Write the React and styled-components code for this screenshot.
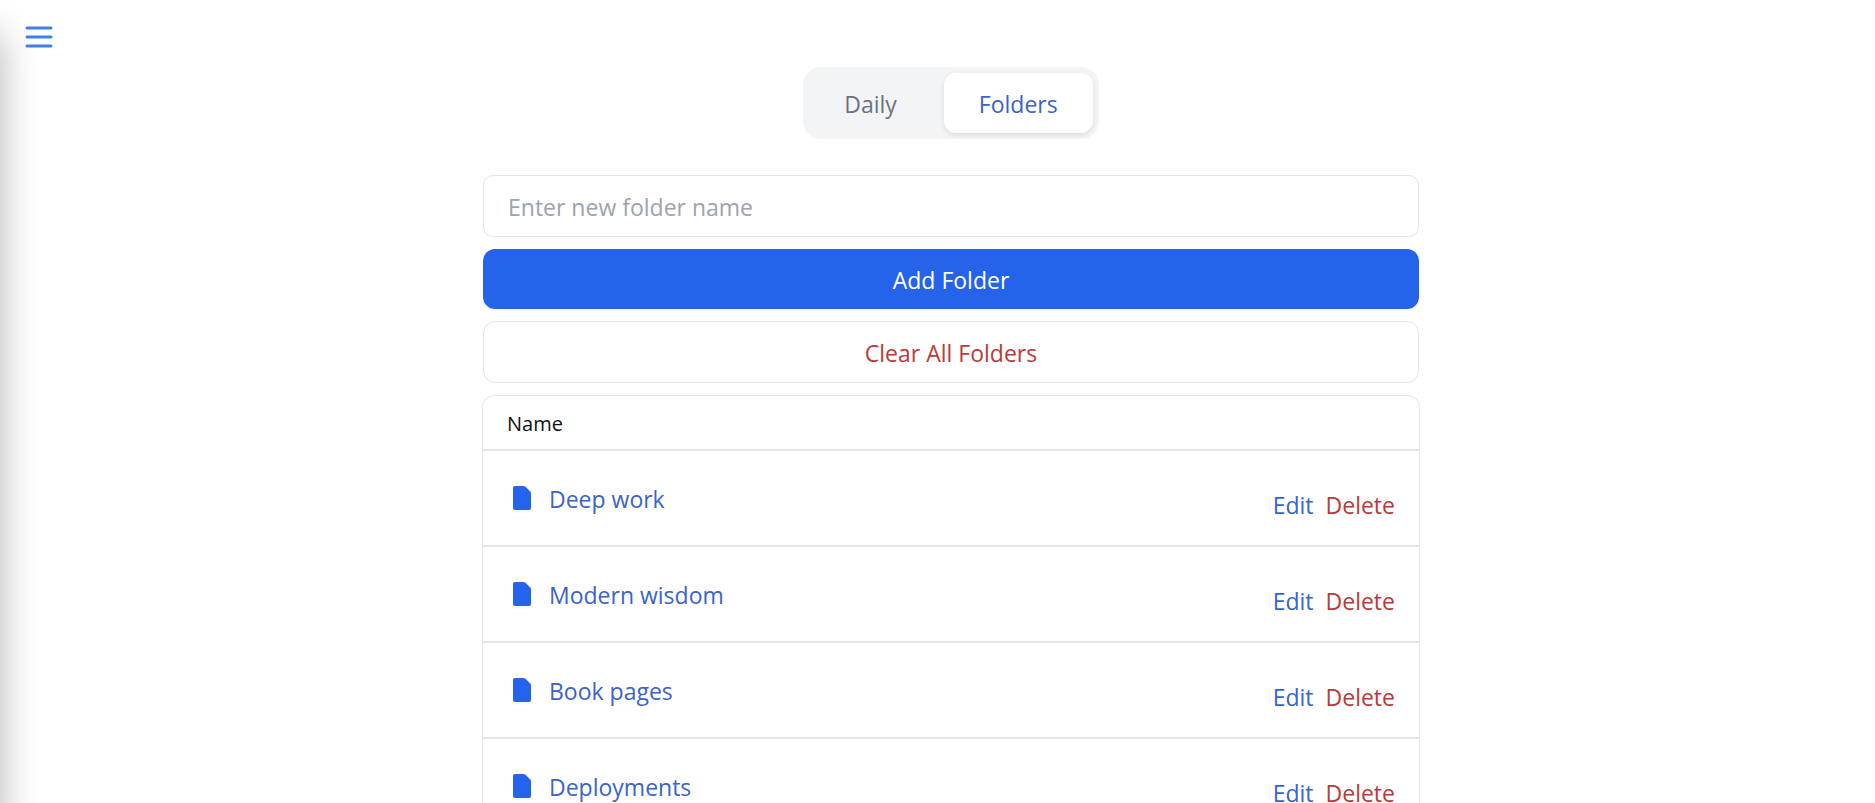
import React, { useState } from 'react';
import styled, { createGlobalStyle } from 'styled-components';

const blue = '#2563eb';
const linkBlue = '#3a64c8';
const red = '#bb3a36';
const border = '#e5e5e7';

const GlobalStyle = createGlobalStyle`
    *, *::before, *::after {
        box-sizing: border-box;
    }

    body {
        margin: 0;
        background: #fff;
        color: #111;
        font-family: "Open Sans", "Noto Sans", sans-serif;
        font-size: 23px;
        line-height: 36px;
    }

    button, input {
        font: inherit;
        margin: 0;
    }

    button {
        cursor: pointer;
    }
`;

// Slides in from the left, only its shadow shows while closed
const Drawer = styled.aside`
    position: fixed;
    top: 0;
    bottom: 0;
    left: 0;
    width: 384px;
    background: #fff;
    box-shadow: 0 36px 36px rgba(0, 0, 0, 0.3);
    transform: translateX(${props => (props.$open ? '0' : '-100%')});
`;

const Page = styled.div`
    padding-left: 27px;
`;

const TopBar = styled.header`
    display: flex;
    height: 67px;
    padding-top: 19px;
    margin-left: -6px;
`;

const MenuButton = styled.button`
    position: relative;
    z-index: 1;
    width: 36px;
    height: 36px;
    padding: 0;
    border: 0;
    background: transparent;
    color: #427fe4;

    svg {
        display: block;
    }
`;

const Main = styled.main`
    display: flex;
    flex-direction: column;
    align-items: center;
    gap: 36px;
    max-width: 1008px;
    margin: 0 auto;
    padding: 0 36px 36px;
`;

const Tabs = styled.div`
    display: flex;
    gap: 12px;
    padding: 6px;
    border-radius: 18px;
    background: #f3f4f6;
`;

const Tab = styled.button`
    padding: 13px 35px 11px;
    border: 0;
    border-radius: 12px;
    background: ${props => (props.$active ? '#fff' : 'transparent')};
    color: ${props => (props.$active ? linkBlue : '#6b7280')};
    box-shadow: ${props => (props.$active ? '0 2px 5px rgba(0, 0, 0, 0.1)' : 'none')};
`;

const Form = styled.form`
    display: flex;
    flex-direction: column;
    gap: 12px;
    width: 100%;
`;

const NameInput = styled.input`
    width: 100%;
    height: 62px;
    padding: 13px 24px 11px;
    border: 1px solid ${border};
    border-radius: 10px;
    background: #fff;

    &::placeholder {
        color: #9ca3af;
        opacity: 1;
    }
`;

const AddButton = styled.button`
    padding: 13px 24px 11px;
    border: 0;
    border-radius: 12px;
    background: ${blue};
    color: #fff;
`;

const ClearButton = styled.button`
    padding: 13px 24px 11px;
    border: 1px solid ${border};
    border-radius: 12px;
    background: #fff;
    color: ${red};
`;

// The card's border sits just outside the width of the form
const TableCard = styled.div`
    margin: 0 -1px;
    border: 1px solid ${border};
    border-radius: 12px;
    overflow: hidden;
`;

const Table = styled.table`
    width: 100%;
    border-collapse: separate;
    border-spacing: 0;
`;

const HeadCell = styled.th`
    padding: 13px 24px 10px;
    font-size: 20px;
    font-weight: 400;
    line-height: 30px;
    text-align: left;
`;

const Cell = styled.td`
    height: 96px;
    padding: 0 24px;
    border-top: 2px solid ${border};
`;

const FolderButton = styled.button`
    display: flex;
    align-items: center;
    gap: 12px;
    padding: 0;
    border: 0;
    background: transparent;
    color: ${linkBlue};

    svg {
        color: ${blue};
    }
`;

const FolderName = styled.span`
    padding-top: 2px;
`;

const Actions = styled.div`
    display: flex;
    justify-content: flex-end;
    gap: 12px;
    padding-top: 14px;
`;

const ActionButton = styled.button`
    padding: 0;
    border: 0;
    background: transparent;
    color: ${props => (props.$danger ? red : linkBlue)};
`;

const MenuIcon = () => (
    <svg width="36" height="36" viewBox="0 0 24 24" fill="none" stroke="currentColor" strokeWidth="2" strokeLinecap="round">
        <path d="M4 6h16M4 12h16M4 18h16" />
    </svg>
);

const FileIcon = () => (
    <svg width="30" height="30" viewBox="0 0 20 20" fill="currentColor">
        <path d="M4 3.2A1.2 1.2 0 0 1 5.2 2H11.3a1.2 1.2 0 0 1 .85.35l3.5 3.5a1.2 1.2 0 0 1 .35.85v10.1a1.2 1.2 0 0 1-1.2 1.2H5.2A1.2 1.2 0 0 1 4 16.8z" />
    </svg>
);

const FolderRow = ({ name, onEdit, onDelete }) => (
    <tr>
        <Cell>
            <FolderButton type="button">
                <FileIcon />
                <FolderName>{name}</FolderName>
            </FolderButton>
        </Cell>
        <Cell>
            <Actions>
                <ActionButton type="button" onClick={onEdit}>Edit</ActionButton>
                <ActionButton type="button" $danger onClick={onDelete}>Delete</ActionButton>
            </Actions>
        </Cell>
    </tr>
);

const App = () => {

    const [open, setOpen] = useState(false);
    const [tab, setTab] = useState("Folders");
    const [newName, setNewName] = useState("");
    const [folders, setFolders] = useState(["Deep work", "Modern wisdom", "Book pages", "Deployments"]);

    const handleSubmit = (e) => {
        e.preventDefault();

        if (newName !== "") {
            setFolders([...folders, newName]);
            setNewName("");
        }
    }

    // Puts the name back in the text box to be changed
    const editFolder = (name) => {
        setNewName(name);
        setFolders(folders.filter(f => f !== name));
    }

    return (
        <>
            <GlobalStyle />
            <Drawer $open={open} />
            <Page>
                <TopBar>
                    <MenuButton type="button" aria-label="Menu" onClick={() => setOpen(!open)}>
                        <MenuIcon />
                    </MenuButton>
                </TopBar>
                <Main>
                    <Tabs>
                        {["Daily", "Folders"].map(t => (
                            <Tab key={t} type="button" $active={t === tab} onClick={() => setTab(t)}>{t}</Tab>
                        ))}
                    </Tabs>
                    <Form onSubmit={handleSubmit}>
                        <NameInput
                            aria-label="Folder name"
                            placeholder="Enter new folder name"
                            value={newName} onChange={e => setNewName(e.target.value)} />
                        <AddButton type="submit">Add Folder</AddButton>
                        <ClearButton type="button" onClick={() => setFolders([])}>Clear All Folders</ClearButton>
                        <TableCard>
                            <Table>
                                <thead>
                                    <tr><HeadCell colSpan="2">Name</HeadCell></tr>
                                </thead>
                                <tbody>
                                    {folders.map(name => (
                                        <FolderRow key={name} name={name}
                                            onEdit={() => editFolder(name)}
                                            onDelete={() => setFolders(folders.filter(f => f !== name))} />
                                    ))}
                                </tbody>
                            </Table>
                        </TableCard>
                    </Form>
                </Main>
            </Page>
        </>
    );
}

export default App;
